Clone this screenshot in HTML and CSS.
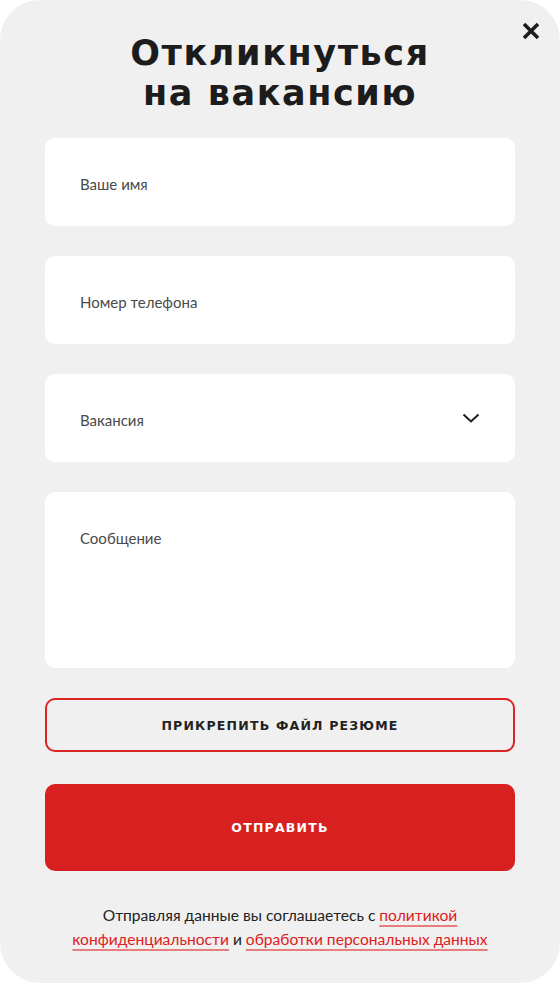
FILE: index.html
```html
<!DOCTYPE html>
<html lang="ru">
<head>
<meta charset="utf-8">
<link rel="stylesheet" href="styles.css">
</head>
<body>
<div class="modal">
  <button class="close" aria-label="Закрыть">
    <svg width="18" height="18" viewBox="0 0 18 18"><path d="M2 2L16 16M16 2L2 16" stroke="#1c1c1c" stroke-width="3.6" stroke-linecap="butt"/></svg>
  </button>
  <h1 class="title">Откликнуться<br>на вакансию</h1>
  <form class="form">
    <div class="field"><span class="ph">Ваше имя</span></div>
    <div class="field"><span class="ph">Номер телефона</span></div>
    <div class="field select"><span class="ph">Вакансия</span>
      <svg class="chev" width="18" height="10" viewBox="0 0 18 10"><path d="M1.5 1.5L9 8.5L16.5 1.5" fill="none" stroke="#1c1c1c" stroke-width="2"/></svg>
    </div>
    <div class="field area"><span class="ph">Сообщение</span></div>
    <div class="btn attach">ПРИКРЕПИТЬ ФАЙЛ РЕЗЮМЕ</div>
    <div class="btn submit">ОТПРАВИТЬ</div>
  </form>
  <p class="note">Отправляя данные вы соглашаетесь с <a href="#">политикой конфиденциальности</a> и <a href="#">обработки персональных данных</a></p>
</div>
</body>
</html>
```
FILE: styles.css
```css
html, body { margin: 0; padding: 0; background: #ffffff; }
.modal {
  position: relative;
  width: 560px;
  height: 983px;
  box-sizing: border-box;
  background: #f0f0f0;
  border-radius: 40px;
  padding: 33px 45px 0;
  font-family: "Lato", "Noto Sans", sans-serif;
}
.close {
  position: absolute;
  top: 22px;
  right: 20px;
  width: 18px;
  height: 18px;
  padding: 0;
  border: 0;
  background: none;
  display: flex;
}
.title {
  margin: 0 -20px;
  text-align: center;
  font-family: "DejaVu Sans", sans-serif;
  font-weight: bold;
  font-size: 35px;
  line-height: 40px;
  letter-spacing: 1.6px;
  color: #1c1c1c;
}
.form {
  margin-top: 25px;
  display: flex;
  flex-direction: column;
  gap: 30px;
}
.field {
  height: 88px;
  box-sizing: border-box;
  background: #ffffff;
  border-radius: 10px;
  padding: 3px 35px 0;
  display: flex;
  align-items: center;
  justify-content: space-between;
}
.field.area {
  height: 176px;
  align-items: flex-start;
  padding-top: 37px;
}
.ph {
  font-size: 15px;
  color: #4a4a4a;
  line-height: 18px;
}
.chev { display: block; margin-top: -3px; }
.btn {
  display: flex;
  align-items: center;
  justify-content: center;
  border-radius: 10px;
  font-family: "DejaVu Sans", sans-serif;
  font-weight: bold;
  font-size: 12.5px;
  letter-spacing: 1.2px;
}
.attach {
  height: 54px;
  box-sizing: border-box;
  border: 2px solid #d92424;
  color: #222222;
}
.submit {
  height: 87px;
  margin-top: 2px;
  background: #d82020;
  color: #ffffff;
}
.note {
  margin: 32px -10px 0;
  text-align: center;
  font-size: 15.6px;
  line-height: 24px;
  color: #222222;
}
.note a {
  color: #e02020;
  text-decoration: underline;
  text-decoration-color: rgba(224, 32, 32, 0.55);
  text-underline-offset: 4px;
  text-decoration-thickness: 1.5px;
}
```
